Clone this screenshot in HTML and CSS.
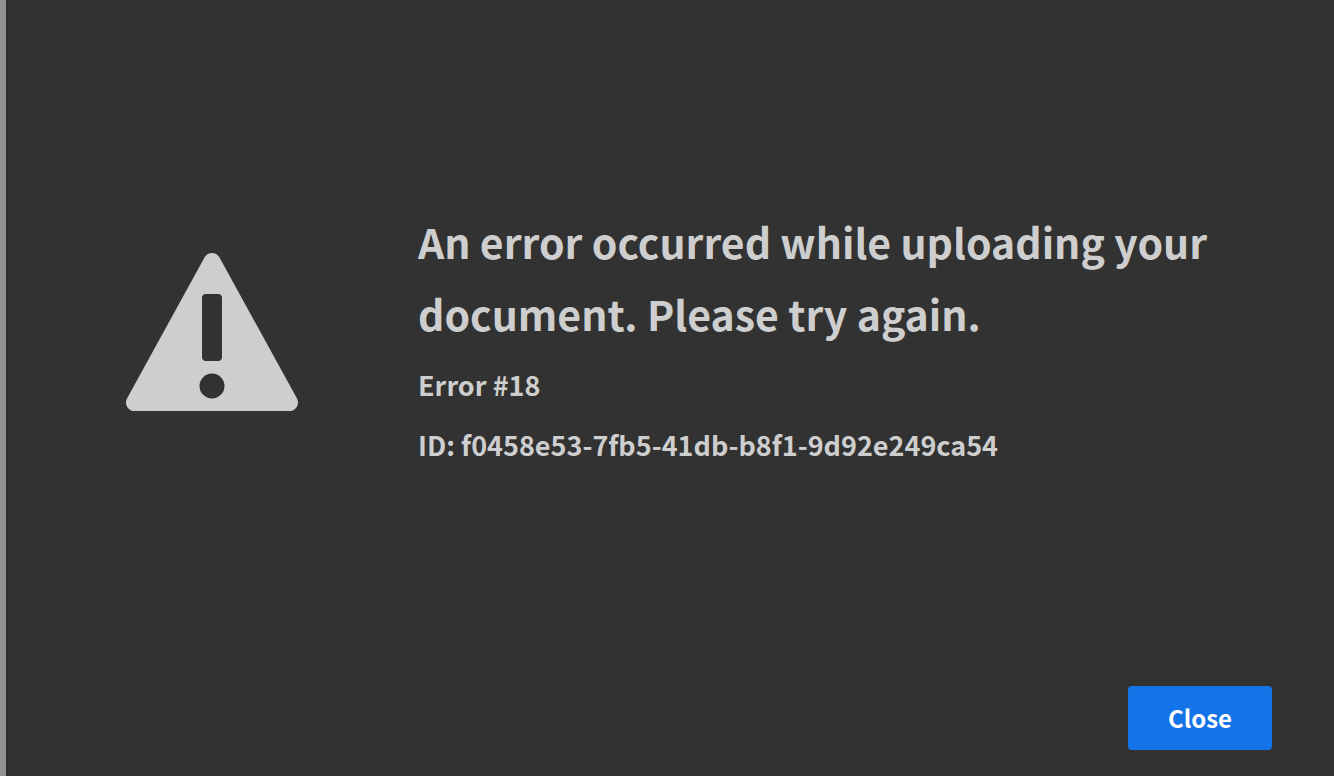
FILE: index.html
```html
<!DOCTYPE html>
<html lang="en">
<head>
  <meta charset="UTF-8">
  <meta name="viewport" content="width=device-width, initial-scale=1.0">
  <title>Upload error</title>
  <link rel="stylesheet" href="styles.css">
</head>
<body>
  <div class="dialog" role="alertdialog" aria-labelledby="errorTitle" aria-describedby="errorDetails">
    <main class="content">
      <svg class="alert-icon" viewBox="0 0 172 158" aria-hidden="true">
        <path fill="#cecece" fill-rule="evenodd" d="M78.500 4.500Q81 0 86 0T93.500 4.500L171 145.500C174 151 170 158 163.500 158H8.500C2 158-2 151 1 145.500ZM80 41Q76 41 76 45V104Q76 108 80 108H92Q96 108 96 104V45Q96 41 92 41ZM86 120.500A12.500 12.500 0 1 0 86 145.500A12.500 12.500 0 1 0 86 120.500Z"/>
      </svg>
      <div class="message">
        <h1 id="errorTitle">An error occurred while uploading your document. Please try again.</h1>
        <div id="errorDetails">
          <p>Error #18</p>
          <p>ID: f0458e53-7fb5-41db-b8f1-9d92e249ca54</p>
        </div>
      </div>
    </main>
    <footer class="actions">
      <button type="button" class="close-button">Close</button>
    </footer>
  </div>
</body>
</html>
```
FILE: styles.css
```css
* {
  box-sizing: border-box;
}

body {
  margin: 0;
  background-color: #323232;
  color: #cecece;
  font-family: "Noto Sans CJK JP", "Open Sans", sans-serif;
  font-weight: 700;
}

.dialog {
  display: flex;
  flex-direction: column;
  min-height: 100vh;
  border-left: 6px solid #939393;
  box-shadow: inset 1px 0 1px #292929;
}

.content {
  flex: 1;
  display: flex;
  align-items: center;
  gap: 120px;
  padding: 0 100px 6px 120px;
}

.alert-icon {
  flex: none;
  width: 172px;
  margin-bottom: 16px;
}

.message {
  flex: 1;
  min-width: 0;
}

.message h1 {
  margin: 0 0 6px;
  font-size: 41px;
  font-weight: 700;
  line-height: 72px;
}

.message p {
  margin: 0;
  font-size: 27px;
  line-height: 60px;
  overflow-wrap: anywhere;
}

.actions {
  display: flex;
  justify-content: flex-end;
  padding: 0 62px 26px;
}

.close-button {
  min-width: 144px;
  height: 64px;
  padding: 0 32px 2px;
  border: none;
  border-radius: 4px;
  background-color: #1473e6;
  color: #fff;
  font: inherit;
  font-size: 24px;
  cursor: pointer;
}

.close-button:hover {
  background-color: #0d66d0;
}
```
